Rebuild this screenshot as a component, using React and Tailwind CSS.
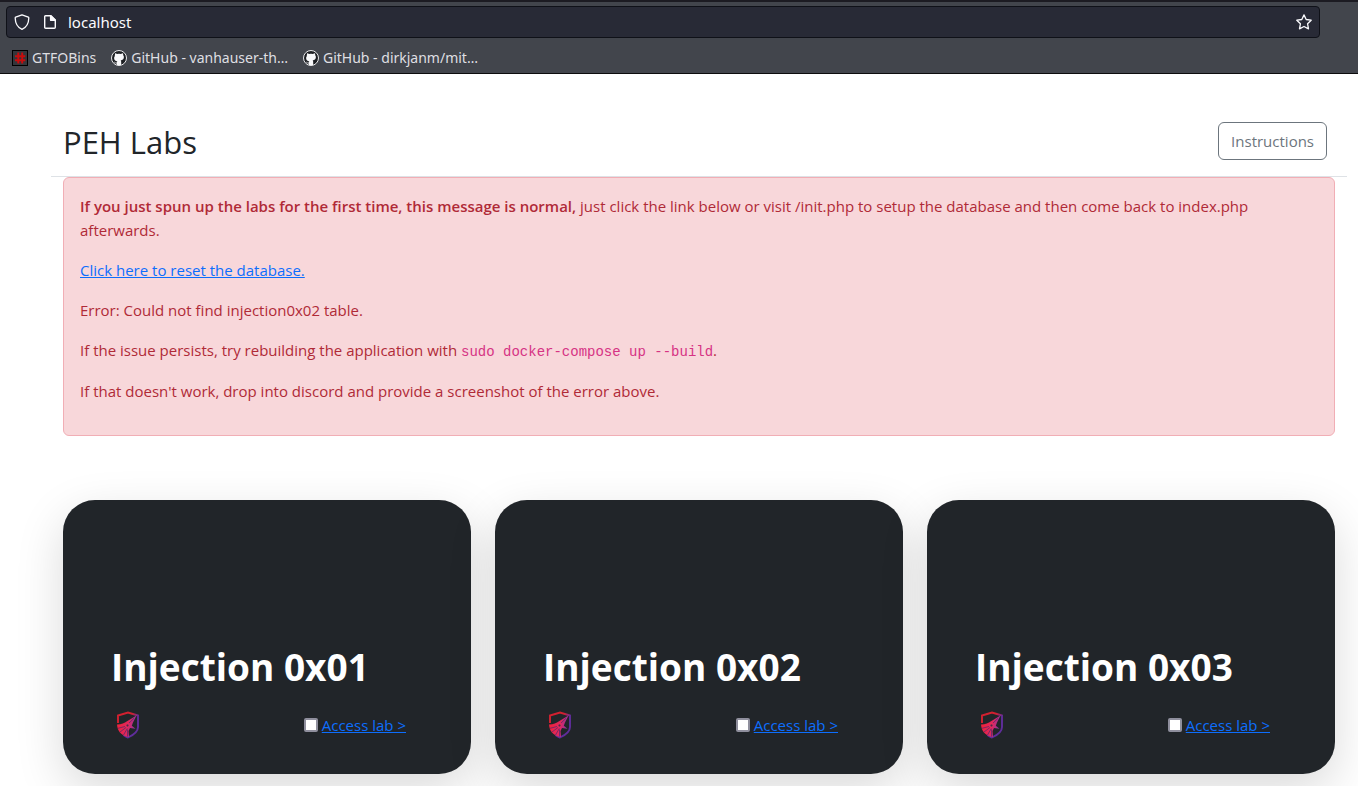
const labs = ["Injection 0x01", "Injection 0x02", "Injection 0x03"];

function ShieldIcon() {
  return (
    <svg className="size-4" viewBox="0 0 16 16" fill="none" stroke="#fbfbfe" strokeWidth="1.3" strokeLinejoin="round" aria-hidden="true">
      <path d="M8 .8 14.3 3.2c.4.2.5.4.5.8-.1 5.6-2.600 9.500-6.800 11.300C3.800 13.500 1.300 9.600 1.200 4c0-.4.1-.6.5-.8z" />
    </svg>
  );
}

function PageIcon() {
  return (
    <svg className="size-4" viewBox="0 0 16 16" fill="none" stroke="#fbfbfe" strokeWidth="1.4" strokeLinejoin="round" aria-hidden="true">
      <path d="M3.500 1.700h5.500l4.300 4.300v7.300c0 .6-.4 1-1 1H3.700c-.6 0-1-.4-1-1V2.700c0-.6.4-1 .8-1z" />
      <path d="M8.600 1.700v4.600h4.700z" fill="#fbfbfe" />
    </svg>
  );
}

function StarIcon() {
  return (
    <svg className="size-4" viewBox="0 0 16 16" fill="none" stroke="#fbfbfe" strokeWidth="1.3" strokeLinejoin="round" aria-hidden="true">
      <path d="M8 .9l2.200 4.600 5 .7-3.600 3.600.9 5L8 12.500l-4.500 2.300.9-5L.8 6.200l5-.7z" />
    </svg>
  );
}

function HashIcon() {
  return (
    <svg className="size-4" viewBox="0 0 16 16" aria-hidden="true">
      <rect x=".5" y=".5" width="15" height="15" fill="#34363b" stroke="#000" />
      <path d="M6.300 2.500v11M10.200 2.500v11M3 6.200h10.300M3 10.200h10.300" fill="none" stroke="#c80c0c" strokeWidth="2" />
    </svg>
  );
}

function GitHubIcon() {
  return (
    <svg className="size-4" viewBox="0 0 16 16" aria-hidden="true">
      <circle cx="8" cy="8" r="7.500" fill="#1d1f23" stroke="#e8e8ea" />
      <path fill="#f8f8fa" d="M4 3.200c.8 0 1.500.4 2 .8a8 8 0 0 1 4 0c.5-.4 1.200-.8 2-.8.3.7.3 1.300.1 1.800.5.600.8 1.300.8 2.100 0 2.400-1.500 3.200-3.200 3.400.4.400.5.9.5 1.500v3a7.500 7.500 0 0 1-4.400 0v-1.600c-1.800.3-2.100-.9-2.500-1.400l-.5-.5c1 0 1.300 1 1.900 1.200.400.1.8 0 1.100-.1.1-.5.200-.8.500-1.100-1.700-.2-3.200-1-3.200-3.400 0-.8.300-1.500.8-2.100-.2-.5-.2-1.100.1-1.800z" />
    </svg>
  );
}

function LabLogo() {
  return (
    <svg className="h-7 w-6" viewBox="0 0 24 28" fill="none" aria-hidden="true">
      <defs>
        <linearGradient id="shield" x1="0" y1="0" x2="24" y2="20" gradientUnits="userSpaceOnUse">
          <stop offset=".45" stopColor="#d2202f" />
          <stop offset=".65" stopColor="#5f2d9c" />
        </linearGradient>
        <linearGradient id="bird" x1="2" y1="14" x2="20" y2="18" gradientUnits="userSpaceOnUse">
          <stop offset="0" stopColor="#f0223c" />
          <stop offset=".55" stopColor="#e0285e" />
          <stop offset="1" stopColor="#8034b4" />
        </linearGradient>
      </defs>
      <path d="M2 12V4.500L12 1.500l10 3V16c0 5-4.500 8-10 10.500-1.500-.6-3-1.400-4.500-2.500" stroke="url(#shield)" strokeWidth="1.900" />
      <path d="M1 13.500c4.500 0 7.500-1.500 10-3.200L20.500 4.500l-3.500 7-1.200 3.300 3.700 3-5.500-.8-1.500 3 .5 6-2-.2C5 24 1.500 20 1 13.500z" fill="url(#bird)" />
      <path d="M2 17.300l7-1.800M4 21l6-4.500M7.500 24l3.800-6.500M11.500 25.500v-7M13 12l5-4.700" stroke="#4a2a6b" strokeWidth=".7" />
      <circle cx="11.500" cy="14.500" r="1.400" fill="#4a2a4b" stroke="#f0305e" strokeWidth=".7" />
    </svg>
  );
}

function Bookmark({ icon, children }) {
  return (
    <a href="#" className="flex items-center gap-1 whitespace-nowrap">
      {icon}
      <span>{children}</span>
    </a>
  );
}

function BrowserBar() {
  return (
    <header className="border-t-2 border-b border-t-[#1c1b22] border-b-[#0c0c0d] bg-[#42454c] font-['Noto_Sans',sans-serif] text-[#fbfbfe]">
      <div className="pt-1 pr-[38px] pl-1.5">
        <div className="flex h-8 items-center gap-2.5 rounded border border-[#0f1118] bg-[#282a36] px-[7px] text-[15px]">
          <div className="flex gap-3">
            <ShieldIcon />
            <PageIcon />
          </div>
          <input aria-label="Address" defaultValue="localhost" className="h-6 min-w-0 flex-1 bg-transparent outline-none" />
          <button type="button" aria-label="Bookmark this page">
            <StarIcon />
          </button>
        </div>
      </div>
      <nav className="flex h-[35px] items-center gap-[15px] px-3 pt-1 text-sm text-[#dfdfe2]">
        <Bookmark icon={<HashIcon />}>GTFOBins</Bookmark>
        <Bookmark icon={<GitHubIcon />}>GitHub - vanhauser-th…</Bookmark>
        <Bookmark icon={<GitHubIcon />}>GitHub - dirkjanm/mit…</Bookmark>
      </nav>
    </header>
  );
}

function SetupAlert() {
  return (
    <div role="alert" className="mx-3 flex flex-col gap-4 rounded-md border border-[#f1aeb5] bg-[#f8d7da] px-4 pt-4 pb-8 text-[#b02a37]">
      <p>
        <strong className="font-semibold">If you just spun up the labs for the first time, this message is normal,</strong>{" "}
        just click the link below or visit /init.php to setup the database and then come back to index.php afterwards.
      </p>
      <p>
        <a href="#" className="text-[#0d6efd] underline">Click here to reset the database.</a>
      </p>
      <p>Error: Could not find injection0x02 table.</p>
      <p className="leading-[25px]">
        If the issue persists, try rebuilding the application with{" "}
        <code className="font-['Liberation_Mono',monospace] text-sm leading-none text-[#d63384]">sudo docker-compose up --build</code>.
      </p>
      <p>If that doesn't work, drop into discord and provide a screenshot of the error above.</p>
    </div>
  );
}

function LabCard({ title }) {
  return (
    <article className="rounded-[32px] bg-[#212529] px-12 pt-[143px] pb-[35px] shadow-[0_16px_48px_rgba(0,0,0,0.15)]">
      <h2 className="text-[37px] leading-[48px] font-bold text-white">{title}</h2>
      <div className="flex items-center justify-between pt-5 pr-[17px] pl-[5px]">
        <LabLogo />
        <div className="flex items-center gap-1">
          <input
            type="checkbox"
            aria-label={title + " completed"}
            className="size-3.5 appearance-none rounded-xs border-2 border-[#8f8f9d] bg-white checked:bg-[#0d6efd]"
          />
          <a href="#" className="text-[#0d6efd] underline">Access lab &gt;</a>
        </div>
      </div>
    </article>
  );
}

export default function App() {
  return (
    <div className="h-screen overflow-hidden bg-white font-['Open_Sans','Noto_Sans',sans-serif] text-[15px] leading-6 text-[#212529]">
      <BrowserBar />
      <main className="pt-12 pr-[11px] pl-[51px]">
        <div className="flex items-end justify-between border-b border-[#dee2e6] pr-5 pb-4 pl-3">
          <h1 className="text-[31px] leading-9">PEH Labs</h1>
          <button type="button" className="rounded-md border border-[#6c757d] px-3 py-1.5 text-[#6c757d]">
            Instructions
          </button>
        </div>
        <SetupAlert />
        <section className="grid grid-cols-3 gap-6 px-3 pt-16">
          {labs.map((title) => (
            <LabCard key={title} title={title} />
          ))}
        </section>
      </main>
    </div>
  );
}
